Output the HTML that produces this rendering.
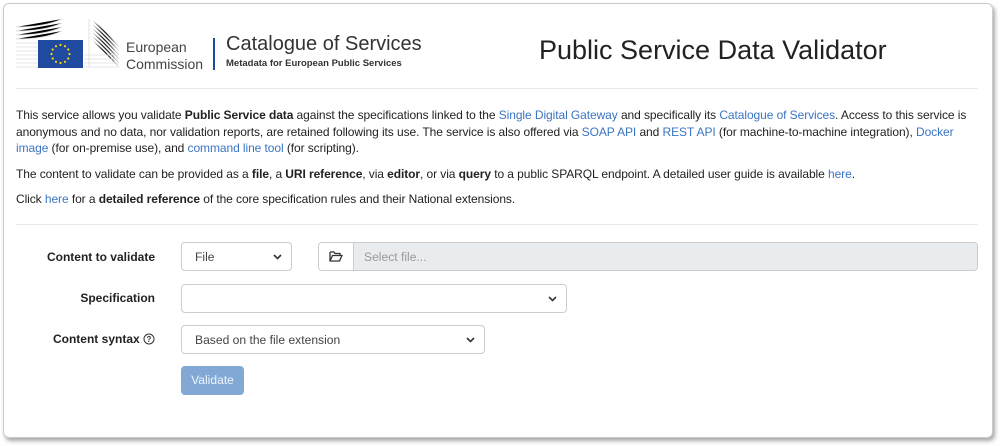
<!DOCTYPE html>
<html><head><meta charset="utf-8"><style>
body{margin:0;width:1000px;height:446px;background:#fff;font-family:"Liberation Sans",Arial,sans-serif;color:#222;overflow:hidden;position:relative}
.card{position:absolute;left:3px;top:3px;width:988px;height:433px;border:1px solid #ccc;border-radius:6px;box-shadow:2px 3px 4px rgba(0,0,0,.35);background:#fff}
.abs{position:absolute}
p{margin:0;font-size:12px;line-height:16.6px;position:absolute;left:16px;width:975px;white-space:nowrap;letter-spacing:-0.08px}
a{color:#3a75c4;text-decoration:none}
.lbl{font-size:12px;font-weight:bold;text-align:right;width:155px;left:0}
.sel{border:1px solid #ccc;border-radius:4px;background:#fff;font-size:12.1px;color:#444;box-sizing:border-box;padding:0 13px;line-height:28px}
.chev{position:absolute;right:9px;top:11px}
</style></head><body>
<div class="card"></div>
<svg class="abs" style="left:15px;top:17px" width="106" height="52">
<g stroke="#dcdcdc" stroke-width="0.8">
<path d="M1 10 Q30 10 47 2 M1 14 Q30 14 47 6 M1 18 Q30 18 47 10 M1 22 Q30 22 47 14 M1 26 L23 26 M1 30 L23 30 M1 34 L23 34 M1 38 L23 38 M1 42 L23 42 M1 46 L23 46 M1 50 L23 50"/>
<path d="M74 2 L74 50 M78 4 Q90 12 104 30 M78 8 Q90 16 104 34 M78 12 Q90 20 104 38 M78 16 Q90 24 104 42 M78 20 Q90 28 104 46 M78 24 Q90 32 104 50 M69 38 L104 38 M69 42 L104 42 M69 46 L104 46 M69 50 L104 50"/>
</g>
<rect x="23" y="23" width="45" height="28" fill="#1f4aa0"/>
<g fill="#ffdd00"><circle cx="45.5" cy="28" r="1.1"/><circle cx="50" cy="29.2" r="1.1"/><circle cx="53.3" cy="32.5" r="1.1"/><circle cx="54.5" cy="37" r="1.1"/><circle cx="53.3" cy="41.5" r="1.1"/><circle cx="50" cy="44.8" r="1.1"/><circle cx="45.5" cy="46" r="1.1"/><circle cx="41" cy="44.8" r="1.1"/><circle cx="37.7" cy="41.5" r="1.1"/><circle cx="36.5" cy="37" r="1.1"/><circle cx="37.7" cy="32.5" r="1.1"/><circle cx="41" cy="29.2" r="1.1"/></g>
</svg>
<div class="abs" style="left:126px;top:39px;font-size:14px;line-height:17px;color:#444">European<br>Commission</div>
<div class="abs" style="left:213px;top:38px;width:2px;height:32px;background:#1f4aa0"></div>
<div class="abs" style="left:226px;top:33px;font-size:20px;color:#333">Catalogue of Services</div>
<div class="abs" style="left:226px;top:58px;font-size:9.5px;font-weight:bold;color:#333">Metadata for European Public Services</div>
<div class="abs" style="left:539px;top:35px;font-size:27px;color:#222">Public Service Data Validator</div>
<div class="abs" style="left:16px;top:88px;width:962px;height:1px;background:#e8e8e8"></div>
<p style="top:107px">This service allows you validate <b>Public Service data</b> against the specifications linked to the <a>Single Digital Gateway</a> and specifically its <a>Catalogue of Services</a>. Access to this service is<br>anonymous and no data, nor validation reports, are retained following its use. The service is also offered via <a>SOAP API</a> and <a>REST API</a> (for machine-to-machine integration), <a>Docker</a><br><a>image</a> (for on-premise use), and <a>command line tool</a> (for scripting).</p>
<p style="top:166px">The content to validate can be provided as a <b>file</b>, a <b>URI reference</b>, via <b>editor</b>, or via <b>query</b> to a public SPARQL endpoint. A detailed user guide is available <a>here</a>.</p>
<p style="top:191px">Click <a>here</a> for a <b>detailed reference</b> of the core specification rules and their National extensions.</p>
<div class="abs" style="left:16px;top:224px;width:962px;height:1px;background:#e8e8e8"></div>
<div class="abs lbl" style="top:250px">Content to validate</div>
<div class="abs sel" style="left:181px;top:242px;width:111px;height:29px">File<svg class="chev" width="9" height="6"><path d="M1 1L4.5 4.5L8 1" stroke="#333" stroke-width="1.6" fill="none"/></svg></div>
<div class="abs" style="left:318px;top:242px;width:660px;height:29px;border:1px solid #ccc;border-radius:4px;box-sizing:border-box;background:#e9ecef;overflow:hidden">
<div class="abs" style="left:0;top:0;width:34px;height:27px;background:#fff;border-right:1px solid #ccc"><svg class="abs" style="left:10px;top:8px" width="14" height="11"><path d="M1 1H5L6 2.5H11V4M1 1V10H10.5L13 4.5H3.5L1 10" stroke="#333" stroke-width="1.3" fill="none"/></svg></div>
<div class="abs" style="left:45px;top:7px;font-size:12.1px;color:#999">Select file...</div></div>
<div class="abs lbl" style="top:291px">Specification</div>
<div class="abs sel" style="left:181px;top:284px;width:386px;height:29px"><svg class="chev" width="9" height="6"><path d="M1 1L4.5 4.5L8 1" stroke="#333" stroke-width="1.6" fill="none"/></svg></div>
<div class="abs lbl" style="top:332px">Content syntax <svg width="12" height="12" style="vertical-align:-2px"><circle cx="6" cy="6" r="5" stroke="#333" fill="none"/><text x="6" y="9" font-size="8" text-anchor="middle" font-family="Liberation Sans" fill="#333">?</text></svg></div>
<div class="abs sel" style="left:181px;top:325px;width:304px;height:29px">Based on the file extension<svg class="chev" width="9" height="6"><path d="M1 1L4.5 4.5L8 1" stroke="#333" stroke-width="1.6" fill="none"/></svg></div>
<div class="abs" style="left:181px;top:366px;width:63px;height:29px;border-radius:4px;background:#82a8d6;color:#eef4fb;font-size:12.1px;text-align:center;line-height:29px">Validate</div>
</body></html>
